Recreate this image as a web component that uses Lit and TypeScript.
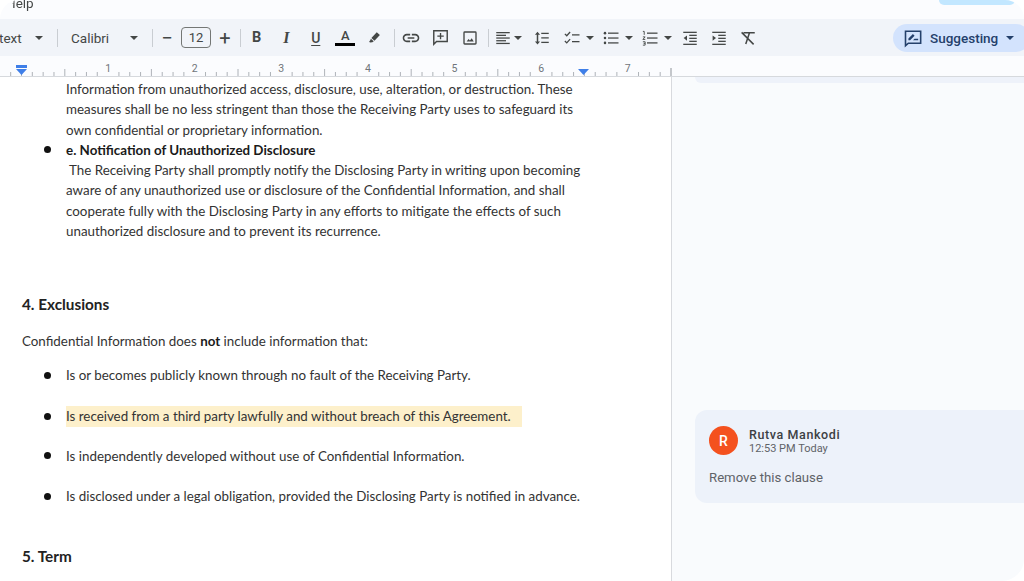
import { LitElement, html, css, svg } from "lit";
import { customElement } from "lit/decorators.js";

const INK = "#444746";
const caret = (cls = "") => html`<span class="caret ${cls}"><i></i></span>`;
const icon = (body: unknown, cls = "") => html`<span class="ic ${cls}"><svg viewBox="0 0 24 24" width="20" height="20">${body}</svg></span>`;
const lines = (rows: [number, number, number][]) => rows.map(([x, y, w]) => svg`<rect x=${x} y=${y} width=${w} height="1.7" fill=${INK}></rect>`);

const icons = {
  link: svg`<path fill=${INK} d="M3.9 12c0-1.71 1.39-3.1 3.1-3.1h4V7H7c-2.76 0-5 2.24-5 5s2.24 5 5 5h4v-1.9H7c-1.71 0-3.1-1.39-3.1-3.1zM8 13h8v-2H8v2zm9-6h-4v1.9h4c1.71 0 3.1 1.39 3.1 3.1s-1.39 3.1-3.1 3.1h-4V17h4c2.76 0 5-2.24 5-5s-2.24-5-5-5z"></path>`,
  comment: svg`<path fill="none" stroke=${INK} stroke-width="1.8" d="M3.5 3.5h17v13.5H7l-3.5 3.500z"></path><path fill=${INK} d="M11.2 6.200h1.700v3.200h3.200v1.700h-3.200v3.200h-1.700v-3.200H8v-1.700h3.200z"></path>`,
  image: svg`<rect x="4" y="4" width="16" height="16" rx="1" fill="none" stroke=${INK} stroke-width="1.8"></rect><path fill=${INK} d="M7.5 16.5l2.6-3.2 1.8 2.1 2.4-3 2.7 4.1z"></path>`,
  align: lines([[3, 4, 18], [3, 7.6, 13], [3, 11.2, 18], [3, 14.8, 13], [3, 18.4, 18]]),
  spacing: svg`<path fill=${INK} d="M6 3.500l3.400 4H7v9h2.400L6 20.500l-3.400-4H5v-9H2.600z"></path>${lines([[11, 5, 10], [11, 11, 10], [11, 17, 10]])}`,
  check: svg`<path fill="none" stroke=${INK} stroke-width="1.7" d="M2.500 6.500l2.500 2.500 4.500-5M2.500 16l2.500 2.500 4.500-5"></path>${lines([[12, 7, 10], [12, 16, 10]])}`,
  bullets: svg`<circle cx="4" cy="5.5" r="1.7" fill=${INK}></circle><circle cx="4" cy="12" r="1.7" fill=${INK}></circle><circle cx="4" cy="18.5" r="1.7" fill=${INK}></circle>${lines([[8, 4.7, 14], [8, 11.2, 14], [8, 17.7, 14]])}`,
  numbers: svg`<path fill="none" stroke=${INK} stroke-width="1.2" d="M2.500 3.200h1.800v4.600M2.500 10.500h3l-3 3.400h3.200M2.500 17h3v4.500h-3M3.500 19.200h2"></path>${lines([[8, 4.7, 14], [8, 11.2, 14], [8, 17.7, 14]])}`,
  outdent: svg`${lines([[3, 3.6, 18], [11, 7.6, 10], [11, 11.6, 10], [11, 15.6, 10], [3, 19.6, 18]])}<path fill=${INK} d="M8 8.500v7L3.500 12z"></path>`,
  indent: svg`${lines([[3, 3.6, 18], [11, 7.6, 10], [11, 11.6, 10], [11, 15.6, 10], [3, 19.6, 18]])}<path fill=${INK} d="M3.500 8.500v7L8 12z"></path>`,
  clear: svg`<path fill="none" stroke=${INK} stroke-width="2" d="M3.500 4.500l16 16M6 5h15M14 5l-5 15"></path>`,
  pen: svg`<path fill=${INK} d="M15.600 3.400l5 4.400-8.600 9.400-5-4.400zM6.100 13.900l4.700 4.100-2.200 1.600-3.800.3-1.400-1.300 2.100-2.500z"></path>`,
  suggest: svg`<path fill="none" stroke="#24406b" stroke-width="1.9" d="M3 3.800h18.200v14.400H6.400L3 21.200z"></path><path fill="#24406b" d="M6.500 14.600v-2l5.400-5.400 2 2-5.400 5.400zM12 14.600h6.200v-1.800h-4.400z"></path>`,
};

const ruler = () => {
  const zero = 21.5, inch = 86.6;
  const ticks = [];
  for (let i = -1; ; i++) {
    const x = zero + (i * inch) / 8;
    if (x > 668) break;
    if (i % 8 === 0 && i > 0) continue;
    const half = ((i % 4) + 4) % 4 === 0;
    ticks.push(svg`<line x1=${x} x2=${x} y1=${half ? 13 : 16} y2="20" stroke="#9aa0a6" stroke-width=".8"></line>`);
  }
  const nums = [1, 2, 3, 4, 5, 6, 7].map(
    (n) => svg`<text x=${zero + n * inch} y="16" text-anchor="middle" font-size="10.5" fill="#70757a" font-family="Roboto, sans-serif">${n}</text>`
  );
  return html`<svg class="rulersvg" width="1024" height="20" viewBox="0 0 1024 20">
    ${ticks}${nums}
    <line x1="671" x2="671" y1="12" y2="20" stroke="#8d9298" stroke-width="1"></line>
    <rect x="16" y="9" width="11" height="3" fill="#3f7fe8"></rect>
    <path d="M16 13h11l-5.500 6z" fill="#3f7fe8"></path>
    <path d="M578 13h11l-5.500 6z" fill="#3f7fe8"></path>
  </svg>`;
};

@customElement("app-root")
export class AppRoot extends LitElement {
  static styles = css`
    :host { display: block; width: 1024px; height: 581px; overflow: hidden; background: #fff; font-family: Roboto, sans-serif; }
    .top { height: 19px; background: #fbfcfe; border-radius: 20px 20px 0 0; display: flex; justify-content: space-between; overflow: hidden; }
    .help { font-size: 13.5px; line-height: 16px; margin: -5px 0 0 6px; color: #444746; -webkit-mask-image: linear-gradient(105deg, transparent 24%, #000 30%); mask-image: linear-gradient(105deg, transparent 24%, #000 30%); }
    .share { width: 76px; height: 5px; margin-right: 9px; background: #c2e7ff; border-radius: 0 0 16px 16px; }
    .toolbar { height: 37px; background: #f1f4f9; display: flex; align-items: center; overflow: hidden; color: #444746; }
    .lbl { font-size: 13.5px; color: #444746; white-space: nowrap; }
    .l1 { margin-left: -1px; width: 33px; }
    .l2 { width: 56px; margin-left: 13px; }
    .caret { display: flex; align-items: center; justify-content: center; width: 14px; height: 20px; flex: none; }
    .caret i { border: 4px solid transparent; border-top: 4.5px solid #444746; border-bottom: 0; }
    .caret.n { width: 10px; }
    .caret.w { width: 16px; }
    .sep { width: 1px; height: 18px; background: #c9cdd2; flex: none; }
    .s1 { margin-left: 11px; }
    .s2 { margin-left: 11px; }
    .s3 { margin-left: 8px; }
    .s4 { margin: 0 2px 0 4px; }
    .s5 { margin-left: 3px; }
    .tiny { font-size: 20px; font-weight: 400; width: 14px; text-align: center; line-height: 20px; color: #444746; flex: none; }
    .minus { margin-left: 7px; }
    .plus { margin-left: 7px; }
    .size { width: 30px; height: 21px; box-sizing: border-box; border: 1px solid #747775; border-radius: 4px; margin-left: 7px; display: flex; align-items: center; justify-content: center; font-size: 13px; color: #444746; flex: none; }
    .btn { width: 29.5px; height: 24px; display: flex; align-items: center; justify-content: center; flex: none; color: #444746; }
    .btn svg { display: block; }
    .b { margin-left: 1px; font: 700 14.5px Roboto, sans-serif; }
    .i { font: italic 700 16px "Liberation Serif", serif; }
    .u { font: 500 14px Roboto, sans-serif; text-decoration: underline; text-underline-offset: 2px; }
    .color { flex-direction: column; font: 500 13px/13px Roboto, sans-serif; }
    .color b { display: block; width: 20px; height: 3px; background: #000; margin-top: 1px; }
    .ic { width: 20px; height: 24px; display: flex; align-items: center; justify-content: center; flex: none; }
    .ic svg { width: 20px; height: 20px; flex: none; }
    .ic.sm svg { width: 18px; height: 18px; }
    .m3 { margin-left: 3px; }
    .m4 { margin-left: 4px; }
    .m9 { margin-left: 9px; }
    .ms { margin-left: 9px; }
    .m10 { margin-left: 10px; }
    .pill { margin-left: auto; margin-right: -6px; width: 137px; flex: none; height: 28px; background: #d3e3fd; border-radius: 14px; display: flex; align-items: center; padding-left: 11px; box-sizing: border-box; color: #24406b; font-size: 13.5px; font-weight: 500; }
    .pill .ic { width: 18px; }
    .pill .name { margin-left: 8px; width: 73px; }
    .pill .caret i { border-top-color: #24406b; }
    .ruler { height: 20px; background: #fbfcfe; }
    .rulersvg { display: block; }
    .main { display: flex; height: 504px; border-top: 1px solid #d6d9dd; }
    .doc { width: 672px; flex: none; box-sizing: border-box; border-right: 1px solid #d8dade; padding: 2px 0 0 22px; background: #fff; font: 13.36px/20.3px Lato, Carlito, sans-serif; color: #333; white-space: nowrap; }
    .body { padding-left: 44px; }
    .line { display: block; }
    .bullet { position: relative; }
    .bullet::before { content: ""; position: absolute; left: 22px; top: 6.5px; width: 7px; height: 7px; border-radius: 50%; background: #111; }
    .line.bullet::before { left: -22px; }
    .strong { font-weight: 700; color: #1a1a1a; }
    .ind { padding-left: 3px; }
    h2 { margin: 0; font: 700 15.3px/24px Lato, Carlito, sans-serif; color: #222; }
    .h4 { margin-top: 51px; }
    .intro { margin-top: 14.500px; }
    ul { list-style: none; margin: 14px 0 0; padding: 0; }
    li { margin-bottom: 20px; padding-left: 44px; }
    li:first-child { margin-bottom: 21px; }
    li:nth-child(2) { margin-bottom: 19px; }
    li:last-child { margin-bottom: 0; }
    mark { display: inline-block; background: #fdf0cb; color: inherit; padding-right: 11px; }
    .h5 { margin-top: 38px; }
    .panel { flex: 1; background: #f9fbfd; border-bottom-right-radius: 22px; padding-left: 23px; }
    .stub { height: 6px; background: #eef2fa; border-bottom-left-radius: 10px; }
    .card { margin-top: 327px; height: 93px; box-sizing: border-box; background: #edf2fa; border-radius: 12px 0 0 12px; padding: 16px 14px; }
    .head { display: flex; align-items: center; gap: 11px; }
    .avatar { width: 29px; height: 29px; border-radius: 50%; background: #f4511e; color: #fff; display: flex; align-items: center; justify-content: center; font-size: 14px; font-weight: 500; flex: none; }
    .who { font-size: 12.5px; font-weight: 500; color: #3c4043; letter-spacing: .6px; line-height: 15px; }
    .when { font-size: 11px; color: #5f6368; line-height: 13px; }
    .msg { margin-top: 15px; font-size: 13.200px; line-height: 16px; color: #5f6368; }
  `;

  render() {
    return html`
      <div class="top"><span class="help">Help</span><span class="share"></span></div>
      <div class="toolbar">
        <span class="lbl l1">text</span>${caret()}
        <span class="sep s1"></span>
        <span class="lbl l2">Calibri</span>${caret()}
        <span class="sep s2"></span>
        <span class="tiny minus">−</span>
        <span class="size">12</span>
        <span class="tiny plus">+</span>
        <span class="sep s3"></span>
        <span class="btn b">B</span>
        <span class="btn i">I</span>
        <span class="btn u">U</span>
        <span class="btn color">A<b></b></span>
        <span class="btn"><svg viewBox="0 0 24 24" width="15" height="15">${icons.pen}</svg></span>
        <span class="sep s4"></span>
        <span class="btn"><svg viewBox="0 0 24 24" width="20" height="20">${icons.link}</svg></span>
        <span class="btn"><svg viewBox="0 0 24 24" width="19" height="19">${icons.comment}</svg></span>
        <span class="btn"><svg viewBox="0 0 24 24" width="18" height="18">${icons.image}</svg></span>
        <span class="sep s5"></span>
        ${icon(icons.align, "m4 sm")}${caret("n")}
        ${icon(icons.spacing, "ms sm")}
        ${icon(icons.check, "m10 sm")}${caret("w")}
        ${icon(icons.bullets, "m3 sm")}${caret("w")}
        ${icon(icons.numbers, "m3 sm")}${caret("w")}
        ${icon(icons.outdent, "m4 sm")}
        ${icon(icons.indent, "m9 sm")}
        ${icon(icons.clear, "m9 sm")}
        <span class="pill">${icon(icons.suggest)}<span class="name">Suggesting</span>${caret()}</span>
      </div>
      <div class="ruler">${ruler()}</div>
      <div class="main">
        <div class="doc">
          <div class="body">
            <span class="line">Information from unauthorized access, disclosure, use, alteration, or destruction. These</span>
            <span class="line">measures shall be no less stringent than those the Receiving Party uses to safeguard its</span>
            <span class="line">own confidential or proprietary information.</span>
            <span class="line strong bullet">e. Notification of Unauthorized Disclosure</span>
            <span class="line ind">The Receiving Party shall promptly notify the Disclosing Party in writing upon becoming</span>
            <span class="line">aware of any unauthorized use or disclosure of the Confidential Information, and shall</span>
            <span class="line">cooperate fully with the Disclosing Party in any efforts to mitigate the effects of such</span>
            <span class="line">unauthorized disclosure and to prevent its recurrence.</span>
          </div>
          <h2 class="h4">4. Exclusions</h2>
          <div class="intro">Confidential Information does <span class="strong">not</span> include information that:</div>
          <ul>
            <li class="bullet">Is or becomes publicly known through no fault of the Receiving Party.</li>
            <li class="bullet"><mark>Is received from a third party lawfully and without breach of this Agreement.</mark></li>
            <li class="bullet">Is independently developed without use of Confidential Information.</li>
            <li class="bullet">Is disclosed under a legal obligation, provided the Disclosing Party is notified in advance.</li>
          </ul>
          <h2 class="h5">5. Term</h2>
        </div>
        <div class="panel">
          <div class="stub"></div>
          <div class="card">
            <div class="head">
              <span class="avatar">R</span>
              <div><div class="who">Rutva Mankodi</div><div class="when">12:53 PM Today</div></div>
            </div>
            <div class="msg">Remove this clause</div>
          </div>
        </div>
      </div>
    `;
  }
}
